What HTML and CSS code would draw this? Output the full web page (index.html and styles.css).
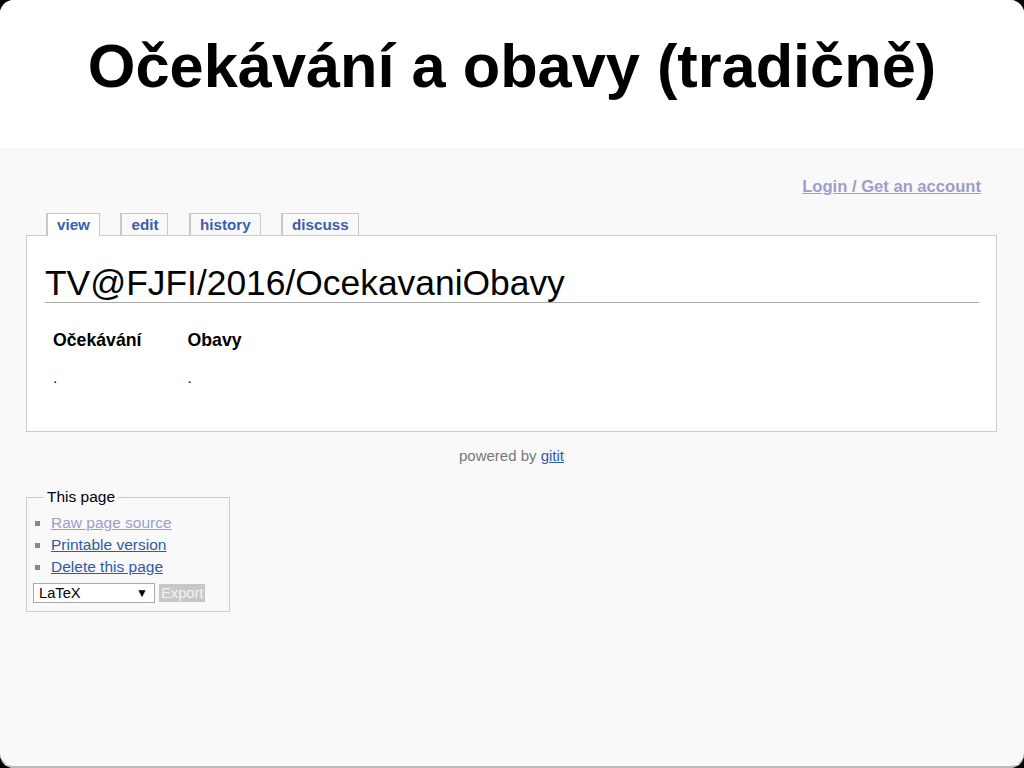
FILE: index.html
```html
<!DOCTYPE html>
<html lang="cs">
<head>
    <meta charset="utf-8">
    <title>Očekávání a obavy (tradičně)</title>
    <link rel="stylesheet" href="styles.css">
</head>
<body>
    <div class="slide">
        <!-- Slide heading -->
        <header class="slide-title">
            <h1>Očekávání a obavy (tradičně)</h1>
        </header>

        <!-- Embedded wiki page -->
        <div class="slide-body">
            <div class="userbox">
                <a class="visited" href="#">Login / Get an account</a>
            </div>

            <ul class="tabs">
                <li class="selected"><a href="#">view</a></li>
                <li><a href="#">edit</a></li>
                <li><a href="#">history</a></li>
                <li><a href="#">discuss</a></li>
            </ul>

            <div class="content">
                <h1 class="pagetitle">TV@FJFI/2016/OcekavaniObavy</h1>
                <table>
                    <thead>
                        <tr><th>Očekávání</th><th>Obavy</th></tr>
                    </thead>
                    <tbody>
                        <tr><td>.</td><td>.</td></tr>
                    </tbody>
                </table>
            </div>

            <div class="footer">powered by <a href="#">gitit</a></div>

            <fieldset class="pagetools">
                <legend>This page</legend>
                <ul>
                    <li><a class="visited" href="#">Raw page source</a></li>
                    <li><a href="#">Printable version</a></li>
                    <li><a href="#">Delete this page</a></li>
                </ul>
                <div class="export-form">
                    <div class="format-select">
                        <span>LaTeX</span>
                        <span class="arrow">▼</span>
                    </div>
                    <button disabled>Export</button>
                </div>
            </fieldset>
        </div>
    </div>
</body>
</html>
```

FILE: styles.css
```css
/* Page behind the slide */
body {
    margin: 0;
    background: #000;
    font-family: "Liberation Sans", Arial, sans-serif;
}

/* The slide itself */
.slide {
    width: 1024px;
    height: 768px;
    border-radius: 14px;
    overflow: hidden;
    display: flex;
    flex-direction: column;
    background: #f9f9f9;
    box-shadow: inset 0 -2px 0 #bbb;
}

.slide-title {
    height: 148px;
    background: #fff;
    text-align: center;
}

.slide-title h1 {
    margin: 32px 0 0;
    font-size: 61.3px;
    font-weight: bold;
    line-height: 68px;
    color: #000;
}

/* Wiki area */
.slide-body {
    flex-grow: 1;
    padding: 29px 27px 0 26px;
    margin-bottom: 3px;
    border-bottom: 1px solid #fff;
}

a {
    color: #2f5aa8;
}

a.visited {
    color: #9d9dc9;
}

.userbox {
    text-align: right;
    padding-right: 16px;
    font-size: 16.6px;
    font-weight: bold;
    line-height: 20px;
}

/* Tabs above the content box */
.tabs {
    list-style: none;
    margin: 16px 0 -1px 20px;
    padding: 0;
    display: flex;
    gap: 20.5px;
    position: relative;
}

.tabs li {
    height: 21px;
    padding: 0 9px;
    border: 1px solid #c8c8c8;
    border-left-width: 2px;
    border-bottom: none;
    font-size: 15.2px;
    font-weight: bold;
    line-height: 22px;
}

.tabs li.selected {
    height: 22px;
    background: #fff;
}

.tabs a {
    color: #3a5eae;
    text-decoration: none;
}

/* Main content box */
.content {
    background: #fff;
    border: 1px solid #ccc;
    padding: 0 17px 41px 18px;
}

.pagetitle {
    margin: 28px 0 0;
    font-size: 35.4px;
    font-weight: normal;
    line-height: 38px;
    border-bottom: 1px solid #aaa;
}

table {
    margin-top: 25px;
    border-collapse: collapse;
}

th {
    padding: 0 38px 0 8px;
    font-size: 17.7px;
    line-height: 24px;
    text-align: left;
}

td {
    padding: 14px 8px 0;
    font-size: 15.4px;
    line-height: 24px;
}

.footer {
    margin-top: 14px;
    text-align: center;
    font-size: 15px;
    line-height: 20px;
    color: #777;
}

/* "This page" box */
.pagetools {
    width: 190px;
    margin: 22px 0 0;
    padding: 0 6px 8px;
    border: 1px solid #ccc;
    font-size: 15.5px;
}

.pagetools legend {
    margin-left: 11px;
    padding: 0 3px;
    line-height: 18px;
}

.pagetools ul {
    margin: 6px 0 0;
    padding-left: 18px;
    list-style: square;
}

.pagetools li {
    line-height: 22px;
}

.pagetools li::marker {
    color: #888;
}

.export-form {
    display: flex;
    align-items: center;
    gap: 4px;
    margin-top: 5px;
}

.format-select {
    width: 110px;
    height: 18px;
    padding: 0 5px;
    border: 1px solid #aaa;
    background: #fff;
    display: flex;
    justify-content: space-between;
    align-items: center;
    font-size: 14.7px;
}

.format-select .arrow {
    font-size: 12px;
    padding-right: 1px;
}

button {
    height: 18px;
    padding: 0 2px;
    border: none;
    background: #c8c8c8;
    color: #f2f2f2;
    font-family: "Liberation Sans", Arial, sans-serif;
    font-size: 14.7px;
}
```
